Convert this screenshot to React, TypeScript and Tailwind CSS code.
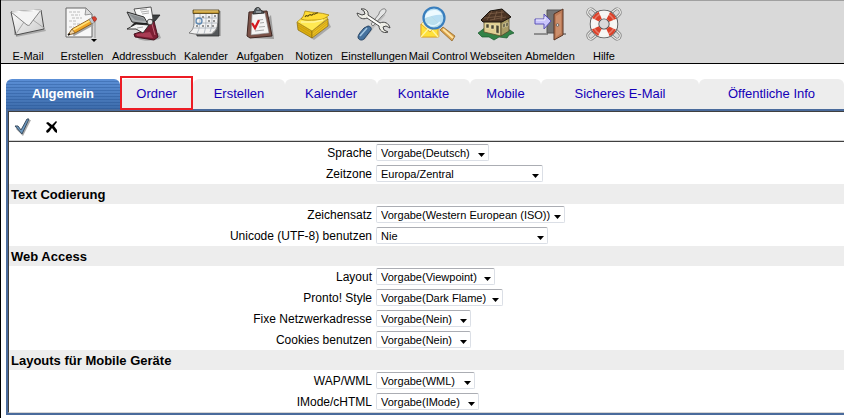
import React from 'react';

const icon = 'block h-9 w-9';

const MailIcon = () => (
  <svg className={icon} viewBox="0 0 36 36">
    <defs>
      <linearGradient id="paper" x1="0" y1="0" x2="1" y2="1">
        <stop offset="0" stopColor="#ffffff" />
        <stop offset="1" stopColor="#c9c9c9" />
      </linearGradient>
    </defs>
    <path d="M4 10l2 21 30-6-1-2-31 6z" fill="#8b8b8b" opacity=".6" />
    <path d="M1 6l30-2 3 19-28 6z" fill="url(#paper)" stroke="#4b4b4b" strokeWidth="1" strokeLinejoin="round" />
    <path d="M6 28l8-12M34 22L23 14" stroke="#a8a8a8" fill="none" />
    <path d="M1 6l16 13c2 1 3 0 4-2L31 4z" fill="#f4f4f4" stroke="#777" strokeWidth=".9" strokeLinejoin="round" />
    <path d="M2 6l29-2" stroke="#fff" />
  </svg>
);

const ComposeIcon = () => (
  <svg className={icon} viewBox="0 0 36 36">
    <path d="M4 32h26V9l2 2v21H5z" fill="#999" opacity=".5" />
    <path d="M2 2h20l6 6v23H2z" fill="#f7f7f7" stroke="#666" strokeWidth="1" />
    <path d="M22 2l-1 7 7-1z" fill="#ddd" stroke="#777" strokeWidth=".7" />
    <path d="M5 6h11M7 9h9M8 12h10M5 15h7M9 18h9M5 21h5" stroke="#bbb" strokeDasharray="3 1" fill="none" />
    <path d="M9 29L29 18" stroke="#a3a3a3" strokeWidth="3" />
    <path d="M8 23L26 13l3 4-18 10-7 2z" fill="#f0a526" stroke="#7c4c0c" strokeWidth=".8" />
    <path d="M9 24L27 14" stroke="#ffe27a" strokeWidth="1.500" />
    <path d="M8 23l3 4-7 2z" fill="#f1d4a4" stroke="#6b4a22" strokeWidth=".6" />
    <path d="M5 27.600L4 29l2-.6z" fill="#111" stroke="#111" />
    <path d="M25 13.500l3-2 3 4.500-3 2z" fill="#bfc6cc" stroke="#666" strokeWidth=".5" />
    <path d="M28 11.500c2-2 6 0 4 3l-2 1z" fill="#db3f2e" stroke="#8b241a" strokeWidth=".6" />
    <path d="M27 33h6l-3 3z" fill="#000" />
  </svg>
);

const AddressIcon = () => (
  <svg className={icon} viewBox="0 0 36 36">
    <path d="M12 33c6 3 18 2 23-1l-2-5H16z" fill="#888" opacity=".6" />
    <path d="M20 17l8-2 4 16-4 3-19-3-1-3 9-3z" fill="#7d1e33" stroke="#3c0b17" strokeWidth=".9" />
    <path d="M10 28l14-2 3 6-16-2z" fill="#a93c54" />
    <path d="M26 18l3 11" stroke="#c26a7c" />
    <path d="M17 9l17 0-5 6-8 2z" fill="#3d4042" stroke="#222" strokeWidth=".8" />
    <path d="M8 3l17-2 2 12-7 3-9-5z" fill="#fafafa" stroke="#444" strokeWidth=".9" />
    <path d="M14 4l7-1M15 6l8-1M16 8l7-1" stroke="#a5a5a5" strokeWidth=".9" />
    <path d="M1 6l17 5 4 7-16-2z" fill="#a9adaf" stroke="#2c2c2c" strokeWidth="1" />
    <path d="M3 8l14 4 2 3-10-1z" fill="#8a8e91" />
    <path d="M8 17l15 0-1 3-17 0z" fill="#1f1f1f" />
    <path d="M1 23l9-5 13 1-6 8-7-4z" fill="#f5f5f5" stroke="#222" strokeWidth=".9" />
    <path d="M11 22l6-1" stroke="#aaa" />
    <circle cx="24" cy="16" r="2.800" fill="#e3e3e3" stroke="#333" strokeWidth=".8" />
  </svg>
);

const CalendarIcon = () => (
  <svg className={icon} viewBox="0 0 36 36">
    <path d="M7 28h24V5h2v25H10z" fill="#888" opacity=".5" />
    <path d="M6 5h25v25H9z" fill="#55585a" stroke="#333" strokeWidth=".8" />
    <path d="M6 7h24c0 7 0 13-2 17-1 2-3 3-4 4-8 0-15 1-23-1 4-3 5-6 5-11z" fill="#f2f2f2" stroke="#666" strokeWidth=".8" />
    <path d="M6 12h24M6 17h23M5 22h23M12 8c0 8 0 14-3 20M18 8c0 8 0 14-2 20M24 8c0 8 0 13-2 18" stroke="#b0b7be" strokeWidth=".9" fill="none" />
    <path d="M14 11h2M20 11h2M26 10h2M14 20h2M20 15h2M25 15h2M8 20h2M19 20h2M24 20h2" stroke="#777" strokeWidth="1.500" />
    <circle cx="11" cy="15" r="3" fill="none" stroke="#5f89b2" strokeWidth="1.300" />
    <path d="M24 28c1-3 3-2 5-6" stroke="#888" fill="none" />
    <path d="M5 4h26v3.500H5z" fill="#c79c37" stroke="#4d3c16" strokeWidth=".8" />
    <path d="M6 5h24" stroke="#e8cb7d" />
  </svg>
);

const TasksIcon = () => (
  <svg className={icon} viewBox="0 0 36 36">
    <path d="M8 32l24 1-3-24z" fill="#777" opacity=".6" />
    <path d="M7 6l18-1 5 25-22 2-3-2z" fill="#7b5147" stroke="#3f2722" strokeWidth="1" />
    <path d="M10 8l13-1 4 20-18 2z" fill="#f4f4f4" stroke="#858585" strokeWidth=".6" />
    <path d="M17 14l4-.5M18 17l4-.5M17 21l6-.5M13 25l9-1" stroke="#aaa" />
    <path d="M11 8c0-3 2-3 2-5 1-2 5-2 5 0 1 2 4 2 4 4z" fill="#555d61" stroke="#222" strokeWidth=".8" />
    <path d="M14 6h5M15 3h2" stroke="#c6ced1" strokeWidth="1.200" />
    <path d="M10 17l3 5 4-8" fill="none" stroke="#d51920" strokeWidth="2.300" />
  </svg>
);

const NotesIcon = () => (
  <svg className={icon} viewBox="0 0 36 36">
    <path d="M5 25l13 9 17-13-3-6z" fill="#888" opacity=".6" />
    <path d="M1 16l15 9v7L2 24z" fill="#dcae10" stroke="#87690d" strokeWidth=".7" />
    <path d="M16 25l16-12v7L16 32z" fill="#eabf22" stroke="#87690d" strokeWidth=".7" />
    <path d="M2 19l14 8 16-12M2 21l14 9 16-13" stroke="#b68d0b" strokeWidth=".5" fill="none" />
    <path d="M1 16L13 6l19 6-16 13z" fill="#ffe953" stroke="#b08d13" strokeWidth=".7" />
    <path d="M5 13c3-3 3-5 4-8 8 2 15 1 24 4-4 4-8 5-14 5-5 0-9 1-14-1z" fill="#ffdc35" stroke="#a88611" strokeWidth=".8" />
    <path d="M9 11c2-3 2 0 3-1s2-2 3-1 2-2 3-1 2-2 4-1" fill="none" stroke="#5d4b0b" strokeWidth="1.100" />
    <path d="M5 16l13 0 9-2" stroke="#fff49a" strokeWidth="1.500" fill="none" />
  </svg>
);

const ToolsIcon = () => (
  <svg className={icon} viewBox="0 0 36 36">
    <path d="M7 33l9-12 12-13" stroke="#999" strokeWidth="4" opacity=".4" />
    <path d="M23 8c0-3 4-6 6-5s1 4-3 7l-9 10-2-2z" fill="#e4e5e5" stroke="#666" strokeWidth=".8" />
    <path d="M12 20c2 0 4 2 3 4L8 33c-2 2-6 1-6-2 0-2 3-6 6-9z" fill="#46729e" stroke="#1d3b5b" strokeWidth=".9" />
    <path d="M11 22l-7 8" stroke="#a6c9e4" strokeWidth="1.500" />
    <path d="M5 3c4-1 8 2 7 6l12 8c4-2 9 0 10 5l-4-2-3 1 1 3 4 2c-5 2-9-2-9-6L11 12c-4 2-9 0-10-5l5 2 3-1-1-3z" fill="#eeeee6" stroke="#454545" strokeWidth="1" />
    <path d="M12 11l12 8" stroke="#fff" strokeWidth="1.500" />
  </svg>
);

const MailControlIcon = () => (
  <svg className={icon} viewBox="0 0 36 36">
    <path d="M1 18l9-9 9 9v13H1z" fill="#fff1a9" stroke="#d8b75f" strokeWidth=".8" />
    <path d="M1 18l9 8 8-8v13H1z" fill="#ffe139" stroke="#d99b1e" strokeWidth=".8" />
    <path d="M1 31l7-8M18 31l-6-7" stroke="#fff4a0" strokeWidth="1.300" />
    <path d="M23 21l12 9-3 5-12-11z" fill="#d9a24c" stroke="#96692b" strokeWidth=".8" />
    <path d="M23 23l10 9" stroke="#ffe4a4" strokeWidth="2" />
    <circle cx="14" cy="12" r="10.500" fill="#b2def5" fillOpacity=".9" stroke="#397ebd" strokeWidth="2.200" />
    <path d="M5 12C5 7 9 4 14 4c4 0 7 2 8 5-5-1-10 1-17 3z" fill="#edfaff" />
    <path d="M8 18c4 3 9 2 12-2" fill="none" stroke="#e0f6ff" strokeWidth="1.500" />
  </svg>
);

const HouseIcon = () => (
  <svg className={icon} viewBox="0 0 36 36">
    <path d="M0 27l8-6 24 3 4 3-5 2-2 3-8-1-5 3-5-3-7 0z" fill="#338247" stroke="#19592d" strokeWidth=".7" />
    <path d="M6 14l10-3 7 5v14L6 26z" fill="#e0cf93" stroke="#5c512b" strokeWidth=".8" />
    <path d="M23 15l8-4v14l-8 5z" fill="#a99b65" stroke="#51472b" strokeWidth=".8" />
    <path d="M3 14L12 5l12-2 9 8-9 5-8 0-11 0z" fill="#4b3424" stroke="#19130d" strokeWidth="1" />
    <path d="M6 12l19-2M10 8l16-2M12 14l16-3M14 5l-5 9M19 5l-3 9M24 4l-1 10" stroke="#82634b" strokeWidth=".7" />
    <path d="M8 18l3 0v4l-3 0zM13 19l3 0v4l-3 0zM18 19l3 .5v8l-3-.5zM25 18l2-1v4l-2 1zM28 17l2-1v4l-2 1z" fill="#4a4632" stroke="#f3e8bd" strokeWidth=".5" />
  </svg>
);

const ExitIcon = () => (
  <svg className={icon} viewBox="0 0 36 36">
    <path d="M15 4h14v23H15z" fill="#747474" stroke="#555" strokeWidth="1" />
    <path d="M2 28h14M28 28h6" stroke="#444" strokeWidth="1" />
    <path d="M22 8l9-5v26l-9 5z" fill="#bc7a56" stroke="#573322" strokeWidth="1" />
    <path d="M24 10l5-3v20l-5 4z" fill="#cc8f6c" />
    <circle cx="25.500" cy="19" r="1.300" fill="#eee" stroke="#444" strokeWidth=".7" />
    <path d="M3 13h9V8l7 7-7 8v-5H3z" fill="#c9c5fb" stroke="#5b52b8" strokeWidth="1" strokeLinejoin="round" />
    <path d="M4 14h9v-3" fill="none" stroke="#f4f3ff" />
  </svg>
);

const rope =
  'M11 7L6 3C3 2 1 5 2 8l5 5M25 7l5-4c3-1 5 2 4 5l-5 5M11 29l-5 4c-3 1-5-2-4-5l5-5M25 29l5 4c3 1 5-2 4-5l-5-5';

const HelpIcon = () => (
  <svg className={icon} viewBox="0 0 36 36">
    <path d={rope} fill="none" stroke="#777" strokeWidth="2.600" />
    <path d={rope} fill="none" stroke="#e9e9e6" strokeWidth="1.300" />
    <circle cx="18" cy="18" r="9.500" fill="none" stroke="#4a4a4a" strokeWidth="9.500" />
    <circle cx="18" cy="18" r="9.500" fill="none" stroke="#f5f5f2" strokeWidth="7.800" />
    <circle cx="18" cy="18" r="9.500" fill="none" stroke="#dc4028" strokeWidth="7.800" strokeDasharray="6.500 8.423" strokeDashoffset="-4.210" />
    <circle cx="18" cy="18" r="10.500" fill="none" stroke="#fff" strokeWidth="1.500" opacity=".3" />
  </svg>
);

const tools = [
  { label: 'E-Mail', Icon: MailIcon, width: 'w-[54px]' },
  { label: 'Erstellen', Icon: ComposeIcon, width: 'w-[54px]' },
  { label: 'Addressbuch', Icon: AddressIcon, width: 'w-[70px]' },
  { label: 'Kalender', Icon: CalendarIcon, width: 'w-[54px]' },
  { label: 'Aufgaben', Icon: TasksIcon, width: 'w-[54px]' },
  { label: 'Notizen', Icon: NotesIcon, width: 'w-[54px]' },
  { label: 'Einstellungen', Icon: ToolsIcon, width: 'w-[66px]' },
  { label: 'Mail Control', Icon: MailControlIcon, width: 'w-[62px]' },
  { label: 'Webseiten', Icon: HouseIcon, width: 'w-[54px]' },
  { label: 'Abmelden', Icon: ExitIcon, width: 'w-[54px]' },
  { label: 'Hilfe', Icon: HelpIcon, width: 'w-[54px]' },
];

const tabs = [
  { label: 'Allgemein', basis: 'basis-[114px]', active: true },
  { label: 'Ordner', basis: 'basis-[73px]', marked: true },
  { label: 'Erstellen', basis: 'basis-[92px]' },
  { label: 'Kalender', basis: 'basis-[92px]' },
  { label: 'Kontakte', basis: 'basis-[93px]' },
  { label: 'Mobile', basis: 'basis-[71px]' },
  { label: 'Sicheres E-Mail', basis: 'basis-[158px]' },
  { label: 'Öffentliche Info', basis: 'basis-[145px]' },
];

interface Field {
  id: string;
  label: string;
  value: string;
  width: string;
}

interface Section {
  title?: string;
  fields: Field[];
}

const sections: Section[] = [
  {
    fields: [
      { id: 'language', label: 'Sprache', value: 'Vorgabe(Deutsch)', width: 'w-[113px]' },
      { id: 'timezone', label: 'Zeitzone', value: 'Europa/Zentral', width: 'w-[167px]' },
    ],
  },
  {
    title: 'Text Codierung',
    fields: [
      { id: 'charset', label: 'Zeichensatz', value: 'Vorgabe(Western European (ISO))', width: 'w-[189px]' },
      { id: 'utf8', label: 'Unicode (UTF-8) benutzen', value: 'Nie', width: 'w-[172px]' },
    ],
  },
  {
    title: 'Web Access',
    fields: [
      { id: 'layout', label: 'Layout', value: 'Vorgabe(Viewpoint)', width: 'w-[119px]' },
      { id: 'pronto', label: 'Pronto! Style', value: 'Vorgabe(Dark Flame)', width: 'w-[127px]' },
      { id: 'fixedip', label: 'Fixe Netzwerkadresse', value: 'Vorgabe(Nein)', width: 'w-[95px]' },
      { id: 'cookies', label: 'Cookies benutzen', value: 'Vorgabe(Nein)', width: 'w-[95px]' },
    ],
  },
  {
    title: 'Layouts für Mobile Geräte',
    fields: [
      { id: 'wap', label: 'WAP/WML', value: 'Vorgabe(WML)', width: 'w-[99px]' },
      { id: 'imode', label: 'IMode/cHTML', value: 'Vorgabe(IMode)', width: 'w-[103px]' },
    ],
  },
];

const SelectField: React.FC<{ field: Field }> = ({ field }) => (
  <div className="grid h-[21px] grid-cols-[363px_1fr] items-center gap-1">
    <label htmlFor={field.id} className="text-right text-[12px] leading-4 whitespace-nowrap">
      {field.label}
    </label>
    <div className={`relative h-[17px] ${field.width}`}>
      <select
        id={field.id}
        className="block h-full w-full appearance-none rounded-[2px] border border-[#dbdfe6] border-t-[#abadb3] bg-white pt-px pl-1 text-[11px] leading-[14px] text-black"
      >
        <option>{field.value}</option>
      </select>
      <svg className="pointer-events-none absolute top-[9px] right-1 h-1 w-[7px]" viewBox="0 0 7 4">
        <path d="M0 0h7L3.500 4z" fill="#000" />
      </svg>
    </div>
  </div>
);

export default function App() {
  return (
    <div className="min-h-screen border-l border-black bg-white font-['Liberation_Sans',Arial,sans-serif] text-black">
      <nav className="flex h-16 border-t border-b border-t-[#a0a0a0] border-b-black bg-[#d9d9d9] pt-[5px]">
        {tools.map(({ label, Icon, width }) => (
          <button key={label} type="button" className={`flex shrink-0 flex-col items-center gap-[7px] ${width}`}>
            <Icon />
            <span className="text-[11px] leading-[14px] whitespace-nowrap">{label}</span>
          </button>
        ))}
      </nav>

      <main className="pt-[15px] pl-[5px]">
        <div className="flex h-[30px]">
          {tabs.map((tab) => (
            <a
              key={tab.label}
              href="#"
              className={`relative flex min-w-0 grow items-center justify-center rounded-t-[6px] text-[13px] whitespace-nowrap ${tab.basis} ${
                tab.active
                  ? 'bg-[repeating-linear-gradient(#ffffff00_0_2px,#1d4a8b55_2px_3px),linear-gradient(#5b8fd6,#3d6cab)] font-bold text-white'
                  : 'bg-[#ededed] text-[#1400b8]'
              }`}
            >
              {tab.label}
              {tab.marked && <span className="absolute -top-[3px] right-0 -bottom-px left-0 border-2 border-[#ec1c24]" />}
            </a>
          ))}
        </div>

        <form className="border-y-2 border-l-2 border-[#4a6b9c]">
          <div className="border-t border-b border-l border-t-[#404040] border-b-[#d4d4d4] border-l-[#404040]">
            <div className="flex h-[30px] items-center gap-[14px] border-b border-[#404040] pl-[5px] shadow-[inset_0_-1px_#d4d4d4]">
              <button type="button" aria-label="Speichern">
                <svg className="block h-[18px] w-[18px]" viewBox="0 0 18 18">
                  <path d="M2 11l2-2 4 5 7-12 2 0-8 16z" fill="#aaa" />
                  <path d="M1 8l3 0 3 4L13 1l2 0-7 15z" fill="#6c99c1" stroke="#3b4d5f" strokeWidth="1" strokeLinejoin="round" />
                </svg>
              </button>
              <button type="button" aria-label="Abbrechen">
                <svg className="block h-3 w-3" viewBox="0 0 12 12">
                  <path d="M0 2l2-1L6 4l4-4 1 1-3 4 3 4 0 3-2-1-3-4-3 4-2 1-1-2 4-4z" fill="#000" />
                </svg>
              </button>
            </div>
            {sections.map((section, i) => (
              <section key={i}>
                {section.title && (
                  <h2 className="h-5 bg-[#ededed] pl-0.5 text-[13px] leading-[22px] font-bold">{section.title}</h2>
                )}
                {section.fields.map((field) => (
                  <SelectField key={field.id} field={field} />
                ))}
              </section>
            ))}
          </div>
        </form>
      </main>
    </div>
  );
}
